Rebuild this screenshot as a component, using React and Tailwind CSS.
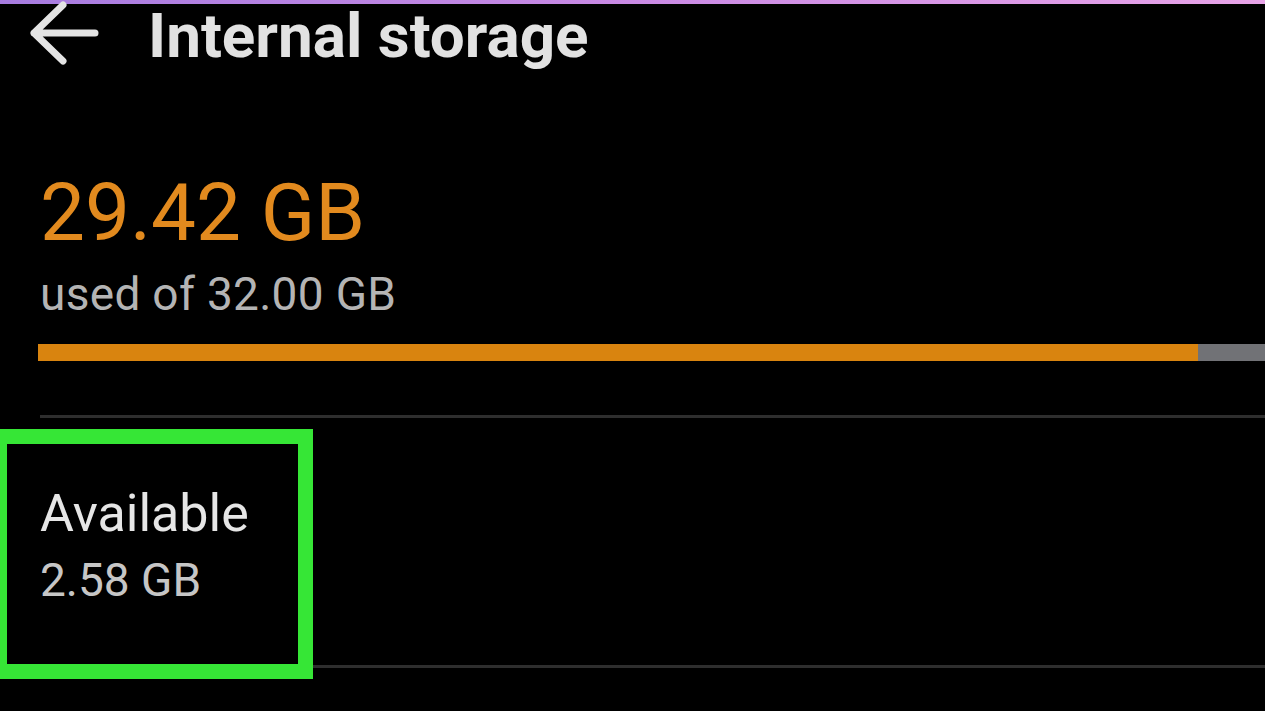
// Storage details screen: header, usage summary, progress bar and highlighted "Available" entry
const BackArrow = () => (
  <svg width="70" height="66" viewBox="0 0 70 66" fill="none" className="shrink-0 ml-[30px] -mt-[4px]">
    <path
      d="M4 32 H65 M33 4 L4 32 L33 60"
      stroke="#e4e4e4"
      strokeWidth="7"
      strokeLinecap="round"
      strokeLinejoin="round"
    />
  </svg>
)

const App = () => {
  const usedPct = 94.5 // share of the bar drawn in orange

  return (
    <div className="w-full h-[711px] bg-black overflow-hidden font-['Roboto',sans-serif]">
      {/* top accent strip */}
      <div className="h-[4px] bg-gradient-to-r from-[#a77ce0] via-[#c98ae4] to-[#e8a4e8]" />

      {/* header */}
      <div className="flex items-start mt-[1px]">
        <BackArrow />
        <h1 className="ml-[48px] text-[62px] leading-none font-bold text-[#e2e2e2]">
          Internal storage
        </h1>
      </div>

      {/* usage summary */}
      <div className="pl-[40px] mt-[106px] text-[80px] leading-none text-[#e28a1e]">
        29.42 GB
      </div>
      <div className="pl-[40px] mt-[18px] text-[46px] leading-none tracking-[0.3px] text-[#b4b4b4]">
        used of 32.00 GB
      </div>

      {/* progress bar */}
      <div className="ml-[38px] mt-[27px] h-[17px] bg-[#717276] flex">
        <div className="h-full bg-[#d9840f]" style={{ width: `${usedPct}%` }} />
      </div>

      <div className="ml-[40px] mt-[54px] h-[3px] bg-[#2e2e2e]" />

      {/* available row with highlight box */}
      <div className="flex items-end mt-[11px]">
        <div className="-ml-[8px] w-[321px] h-[250px] shrink-0 border-[15px] border-[#36e636] pl-[33px] pt-[44px]">
          <div className="text-[52px] leading-none text-[#e6e6e6]">Available</div>
          <div className="mt-[17px] text-[46px] leading-none text-[#c6c6c6]">2.58 GB</div>
        </div>
        <div className="flex-1 h-[3px] mb-[11px] bg-[#2e2e2e]" />
      </div>
    </div>
  )
}

export default App
